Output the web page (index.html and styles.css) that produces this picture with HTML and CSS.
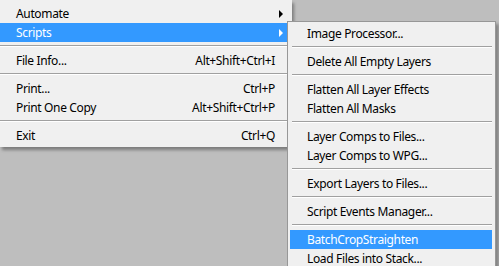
FILE: index.html
```html
<!DOCTYPE html>
<html lang="en">
<head>
    <meta charset="UTF-8">
    <title>File menu - Scripts</title>
    <link rel="stylesheet" href="styles.css">
</head>
<body>
    <div class="menu main-menu">
        <div class="item"><span>Automate</span><span class="arrow"></span></div>
        <div class="item active"><span>Scripts</span><span class="arrow"></span></div>
        <div class="sep"></div>
        <div class="item"><span>File Info...</span><span class="key">Alt+Shift+Ctrl+I</span></div>
        <div class="sep"></div>
        <div class="item"><span>Print...</span><span class="key">Ctrl+P</span></div>
        <div class="item"><span>Print One Copy</span><span class="key">Alt+Shift+Ctrl+P</span></div>
        <div class="sep"></div>
        <div class="item"><span>Exit</span><span class="key">Ctrl+Q</span></div>
    </div>

    <div class="menu sub-menu">
        <div class="item"><span>Image Processor...</span></div>
        <div class="sep"></div>
        <div class="item"><span>Delete All Empty Layers</span></div>
        <div class="sep"></div>
        <div class="item"><span>Flatten All Layer Effects</span></div>
        <div class="item"><span>Flatten All Masks</span></div>
        <div class="sep"></div>
        <div class="item"><span>Layer Comps to Files...</span></div>
        <div class="item"><span>Layer Comps to WPG...</span></div>
        <div class="sep"></div>
        <div class="item"><span>Export Layers to Files...</span></div>
        <div class="sep"></div>
        <div class="item"><span>Script Events Manager...</span></div>
        <div class="sep"></div>
        <div class="item active"><span>BatchCropStraighten</span></div>
        <div class="item"><span>Load Files into Stack...</span></div>
    </div>
</body>
</html>
```

FILE: styles.css
```css
* {
    margin: 0;
    padding: 0;
    box-sizing: border-box;
}

body {
    font-family: 'Noto Sans', 'Open Sans', sans-serif;
    font-size: 12px;
    letter-spacing: -0.35px;
    color: #000;
    background: #bebebe;
    width: 499px;
    height: 266px;
    overflow: hidden;
    position: relative;
}

.menu {
    position: absolute;
    background: #f0f0f0;
}

.main-menu {
    left: 0;
    top: 0;
    width: 292px;
    padding: 4px 5px 2px 0;
    box-shadow: 2px 3px 3px rgba(0, 0, 0, 0.35);
}

.sub-menu {
    left: 287px;
    top: 21px;
    width: 209px;
    height: 250px;
    padding: 2px 3px 0 2px;
    border: 1px solid #979797;
    box-shadow: 3px 3px 3px rgba(0, 0, 0, 0.3);
}

.item {
    height: 19px;
    display: flex;
    align-items: center;
    justify-content: space-between;
    white-space: nowrap;
}

.main-menu .item {
    padding: 0 12px 0 16px;
}

.sub-menu .item {
    padding: 0 10px 0 17px;
}

.item.active {
    background: #3399ff;
    color: #fff;
}

.arrow {
    width: 0;
    height: 0;
    margin-right: -8px;
    border-top: 4px solid transparent;
    border-bottom: 4px solid transparent;
    border-left: 4px solid #000;
}

.active .arrow {
    border-left-color: #fff;
}

.sep {
    height: 9px;
    padding-top: 3px;
}

.sep::before {
    content: '';
    display: block;
    height: 1px;
    background: #a0a0a0;
    border-bottom: 1px solid #fff;
    box-sizing: content-box;
}

.sub-menu .sep {
    margin-left: 2px;
}
```
